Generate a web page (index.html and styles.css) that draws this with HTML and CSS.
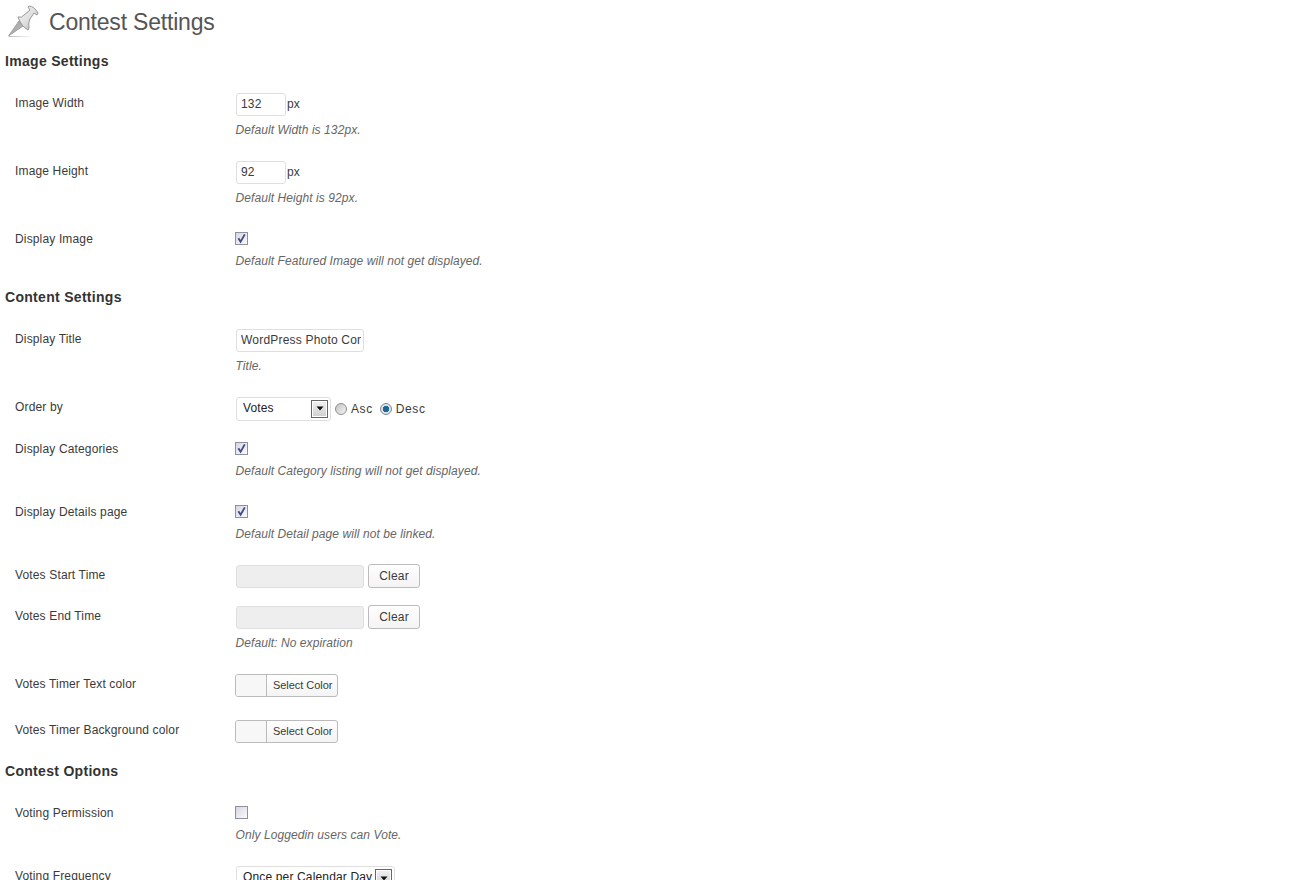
FILE: index.html
```html
<!DOCTYPE html>
<html lang="en">
<head>
    <meta charset="UTF-8">
    <meta name="viewport" content="width=device-width, initial-scale=1.0">
    <title>Contest Settings</title>
    <link rel="stylesheet" href="styles.css">
</head>
<body>
    <svg width="0" height="0" class="defs">
        <symbol id="tick" viewBox="0 0 13 13">
            <path d="M3.4 6.2 L5.6 9.8 L9.8 2.4" fill="none" stroke="#3d4b88" stroke-width="1.8"/>
        </symbol>
        <symbol id="caret" viewBox="0 0 8 5">
            <path d="M0.5 0.5 H7.5 L4 4.5 Z" fill="#111"/>
        </symbol>
    </svg>

    <div class="wrap">
        <div class="page-title">
            <svg class="pin" width="33" height="33" viewBox="8 5 33 33">
                <defs>
                    <linearGradient id="pin-fill" x1="0" y1="0" x2="1" y2="1">
                        <stop offset="0" stop-color="#f6f6f6"/>
                        <stop offset="0.55" stop-color="#dedede"/>
                        <stop offset="1" stop-color="#a8a8a8"/>
                    </linearGradient>
                    <linearGradient id="pin-shadow">
                        <stop offset="0" stop-color="#b8b8b8"/>
                        <stop offset="1" stop-color="#ffffff"/>
                    </linearGradient>
                </defs>
                <path d="M9 36 H34 V37 H9 Z" fill="url(#pin-shadow)"/>
                <path d="M8.5 36 L19 21 L23 26 Z" fill="#b0b0b0" stroke="#8c8c8c" stroke-width="0.7"/>
                <path d="M18 17 Q22 18 24 15 L30 10 L28 7 L29 6 Q34 6 38 13 L37 15 L34 13 L30 19 Q28 23 29 28 L28 30 Q21 26 18 17 Z" fill="url(#pin-fill)" stroke="#8e8e8e" stroke-width="0.9"/>
            </svg>
            <h2>Contest Settings</h2>
        </div>

        <h3>Image Settings</h3>
        <div class="row">
            <label>Image Width</label>
            <div>
                <div class="line"><input class="text small" type="text" value="132"><span class="unit">px</span></div>
                <p class="desc">Default Width is 132px.</p>
            </div>
        </div>
        <div class="row">
            <label>Image Height</label>
            <div>
                <div class="line"><input class="text small" type="text" value="92"><span class="unit">px</span></div>
                <p class="desc">Default Height is 92px.</p>
            </div>
        </div>
        <div class="row">
            <label>Display Image</label>
            <div>
                <span class="check"><svg width="13" height="13"><use href="#tick"/></svg></span>
                <p class="desc below-check">Default Featured Image will not get displayed.</p>
            </div>
        </div>

        <h3>Content Settings</h3>
        <div class="row">
            <label>Display Title</label>
            <div>
                <input class="text" type="text" value="WordPress Photo Contest">
                <p class="desc">Title.</p>
            </div>
        </div>
        <div class="row tight">
            <label>Order by</label>
            <div class="line">
                <div class="select"><span class="select-value">Votes</span><span class="select-arrow"><svg width="8" height="5"><use href="#caret"/></svg></span></div>
                <span class="radio"></span><span class="radio-label">Asc</span>
                <span class="radio on"></span><span class="radio-label">Desc</span>
            </div>
        </div>
        <div class="row">
            <label>Display Categories</label>
            <div>
                <span class="check"><svg width="13" height="13"><use href="#tick"/></svg></span>
                <p class="desc below-check">Default Category listing will not get displayed.</p>
            </div>
        </div>
        <div class="row">
            <label>Display Details page</label>
            <div>
                <span class="check"><svg width="13" height="13"><use href="#tick"/></svg></span>
                <p class="desc below-check">Default Detail page will not be linked.</p>
            </div>
        </div>
        <div class="row short">
            <label>Votes Start Time</label>
            <div class="line">
                <input class="text" type="text" disabled>
                <button class="btn" type="button">Clear</button>
            </div>
        </div>
        <div class="row">
            <label>Votes End Time</label>
            <div>
                <div class="line">
                    <input class="text" type="text" disabled>
                    <button class="btn" type="button">Clear</button>
                </div>
                <p class="desc">Default: No expiration</p>
            </div>
        </div>
        <div class="row color-row">
            <label>Votes Timer Text color</label>
            <div class="color-btn"><span class="swatch"></span><span class="color-text">Select Color</span></div>
        </div>
        <div class="row color-row">
            <label>Votes Timer Background color</label>
            <div class="color-btn"><span class="swatch"></span><span class="color-text">Select Color</span></div>
        </div>

        <h3>Contest Options</h3>
        <div class="row">
            <label>Voting Permission</label>
            <div>
                <span class="check"></span>
                <p class="desc below-check">Only Loggedin users can Vote.</p>
            </div>
        </div>
        <div class="row">
            <label>Voting Frequency</label>
            <div class="select wide"><span class="select-value">Once per Calendar Day</span><span class="select-arrow"><svg width="8" height="5"><use href="#caret"/></svg></span></div>
        </div>
    </div>
</body>
</html>
```
FILE: styles.css
```css
html, body {
    height: 100%;
    overflow: hidden;
}
body {
    margin: 0;
    background: #fff;
    font-family: "Liberation Sans", Arial, sans-serif;
    font-size: 12px;
    line-height: 18px;
    letter-spacing: 0.15px;
    color: #3a3a3a;
}
.defs {
    display: block;
    height: 0;
}
.wrap {
    padding-left: 5px;
}
.page-title {
    display: flex;
    align-items: center;
    gap: 8px;
    height: 46px;
    padding-left: 3px;
    margin-bottom: 6px;
}
.page-title h2 {
    margin: 0 0 2px;
    font-size: 23px;
    font-weight: 400;
    letter-spacing: -0.2px;
    line-height: 44px;
    color: #555;
}
.pin {
    flex: none;
    margin-bottom: 3px;
}
h3 {
    margin: 6px 0 13px;
    font-size: 14px;
    line-height: 18px;
    font-weight: 700;
    color: #333;
    letter-spacing: 0.3px;
}
.row {
    display: grid;
    grid-template-columns: 221px 1fr;
    padding: 10px 0 12px 10px;
}
.row label {
    margin-top: 1px;
}
.row.tight {
    padding-bottom: 9px;
}
.row.short {
    padding-bottom: 8px;
}
.row.color-row {
    padding-bottom: 13px;
}
.line {
    display: flex;
    align-items: center;
    gap: 3px;
    height: 23px;
}
.desc {
    margin: 5px 0 0 -0.5px;
    font-style: italic;
    letter-spacing: 0.08px;
    color: #666;
}
.desc.below-check {
    margin-top: 7px;
}
.text {
    display: block;
    box-sizing: border-box;
    width: 128px;
    height: 23px;
    padding: 0 2px 1px 4px;
    margin: 0;
    border: 1px solid #dfdfdf;
    border-radius: 3px;
    background: #fff;
    font: 12px "Liberation Sans", Arial, sans-serif;
    letter-spacing: 0.2px;
    color: #3a3a3a;
}
.text.small {
    width: 50px;
}
.text:disabled {
    background: #eee;
}
.unit {
    margin-left: -2px;
    padding-bottom: 1px;
}
.btn {
    box-sizing: border-box;
    width: 52px;
    height: 24px;
    margin: -1px 0 0 1px;
    padding: 0;
    border: 1px solid #bbb;
    border-radius: 3px;
    background: linear-gradient(#fefefe, #f4f4f4);
    font: 12px "Liberation Sans", Arial, sans-serif;
    letter-spacing: 0.2px;
    color: #3a3a3a;
}
.check {
    display: block;
    box-sizing: border-box;
    width: 13px;
    height: 13px;
    margin: 3px 0 0 -1px;
    border: 1px solid #8f8f9d;
    background: linear-gradient(135deg, #d6d6e0, #fbfbfb);
}
.check svg {
    display: block;
    margin: -1px;
}
.select {
    box-sizing: border-box;
    display: flex;
    align-items: center;
    justify-content: space-between;
    flex: none;
    width: 95px;
    height: 24px;
    padding: 0 2px 2px 6px;
    border: 1px solid #dfdfdf;
    border-radius: 3px;
    color: #222;
}
.select.wide {
    width: 159px;
}
.select-arrow {
    box-sizing: border-box;
    display: flex;
    align-items: center;
    justify-content: center;
    width: 17px;
    height: 18px;
    margin-top: 2px;
    border: 1px solid #666;
    background: linear-gradient(#f2f2f2, #cfcfcf);
    box-shadow: inset 0 0 0 1px #fff;
}
.radio {
    box-sizing: border-box;
    flex: none;
    width: 12px;
    height: 12px;
    margin-left: 1px;
    border: 1px solid #8e8e8e;
    border-radius: 50%;
    background: linear-gradient(135deg, #c4c4c4, #f4f4f4);
}
.radio.on {
    border-color: #7d8a99;
    background: radial-gradient(circle, #1c5f8c 0, #1f6d9e 3px, #e0e0e0 3.5px);
}
.radio-label {
    margin: 0 3px 0 1px;
    letter-spacing: 0.6px;
}
.color-btn {
    box-sizing: border-box;
    display: flex;
    width: 103px;
    height: 23px;
    margin-left: -1px;
    border: 1px solid #bbb;
    border-radius: 3px;
    background: linear-gradient(#fefefe, #f4f4f4);
    overflow: hidden;
}
.swatch {
    width: 30px;
    border-right: 1px solid #bbb;
    background: #f7f7f7;
}
.color-text {
    padding-left: 6px;
    font-size: 11px;
    line-height: 21px;
    letter-spacing: -0.05px;
    color: #3a3a3a;
}
```
